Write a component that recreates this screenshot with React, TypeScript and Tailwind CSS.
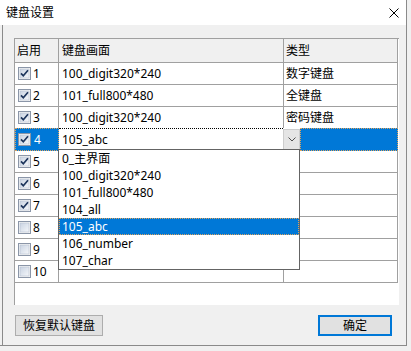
import React from 'react';

type Row = { n: number; on: boolean; name: string; type: string };

const rows: Row[] = [
  { n: 1, on: true, name: '100_digit320*240', type: '数字键盘' },
  { n: 2, on: true, name: '101_full800*480', type: '全键盘' },
  { n: 3, on: true, name: '100_digit320*240', type: '密码键盘' },
  { n: 4, on: true, name: '105_abc', type: '' },
  { n: 5, on: true, name: '', type: '' },
  { n: 6, on: true, name: '', type: '' },
  { n: 7, on: true, name: '', type: '' },
  { n: 8, on: false, name: '', type: '' },
  { n: 9, on: false, name: '', type: '' },
  { n: 10, on: false, name: '', type: '' },
];

const options = ['0_主界面', '100_digit320*240', '101_full800*480', '104_all', '105_abc', '106_number', '107_char'];

const CheckBox = ({ checked }: { checked: boolean }) => (
  <svg width="13" height="13" viewBox="0 0 13 13" className="shrink-0">
    <defs>
      <linearGradient id="cbfill" x1="0" y1="0" x2="1" y2="1">
        <stop offset="0" stopColor="#c9d3e2" />
        <stop offset="1" stopColor="#f5f7fa" />
      </linearGradient>
    </defs>
    <rect x="0.5" y="0.5" width="12" height="12" fill="#f6f6f6" stroke="#8b96a8" />
    <rect x="2" y="2" width="9" height="9" fill="url(#cbfill)" stroke="#b4bfcf" strokeWidth="0.6" />
    {checked && <path d="M3 6.3 L5.3 8.8 L10 3.3" fill="none" stroke="#1d355c" strokeWidth="1.7" />}
  </svg>
);

export default function App() {
  return (
    <div className="w-[411px] h-[351px] bg-[#f0f0f0] text-[12px] leading-none text-black font-['Noto_Sans','Noto_Sans_CJK_SC',sans-serif]">
      <div className="w-[407px] h-[346px] border-r border-b border-[#8a8a8a] flex flex-col">
        {/* title bar */}
        <div className="h-[25px] bg-white flex items-center justify-between pl-[6px] pr-[7px] shrink-0">
          <span>键盘设置</span>
          <svg width="10" height="10" viewBox="0 0 10 10">
            <path d="M0.5 0.5 L9.5 9.5 M9.5 0.5 L0.5 9.5" stroke="#000" strokeWidth="1" />
          </svg>
        </div>

        <div className="flex-1 ml-[2px] border-l border-[#8a8a8a] flex flex-col">
          {/* grid */}
          <div className="relative ml-[11px] mt-[13px] w-[385px] h-[267px] bg-white border-l border-t border-[#a0a0a0]">
            <div className="flex w-[383px] h-[24px] bg-[#f0f0f0] border-b border-[#a0a0a0]">
              <div className="w-[44px] border-r border-[#a0a0a0] flex items-center pl-[2px]">启用</div>
              <div className="w-[225px] border-r border-[#a0a0a0] flex items-center pl-[3px]">键盘画面</div>
              <div className="w-[114px] border-r border-[#a0a0a0] flex items-center pl-[2px]">类型</div>
            </div>

            {rows.map((r) => {
              if (r.n === 4) {
                return (
                  <div key={r.n} className="flex w-[383px] h-[23px]">
                    <div className="w-[44px] bg-[#0078d7] border border-dotted border-[#dca35f] flex items-center pl-[2px] gap-[3px] text-white">
                      <CheckBox checked={r.on} />
                      <span>{r.n}</span>
                    </div>
                    <div className="w-[224px] bg-white border-t border-dotted border-black flex items-center pl-[3px]">
                      {r.name}
                    </div>
                    <div className="w-[17px] my-[1px] bg-[#e5e5e5] border border-[#cdcdcd] flex items-center justify-center">
                      <svg width="8" height="5" viewBox="0 0 8 5">
                        <path d="M0.5 0.5 L4 4 L7.5 0.5" fill="none" stroke="#505050" strokeWidth="1" />
                      </svg>
                    </div>
                    <div className="w-[98px] bg-[#0078d7] border border-dotted border-[#dca35f]" />
                  </div>
                );
              }
              return (
                <div key={r.n} className={`flex w-[383px] ${r.n === 3 ? 'h-[21px]' : 'h-[22px] border-b border-[#a0a0a0]'}`}>
                  <div className="w-[44px] border-r border-[#a0a0a0] flex items-center pl-[3px] gap-[2px]">
                    <CheckBox checked={r.on} />
                    <span>{r.n}</span>
                  </div>
                  <div className="w-[225px] border-r border-[#a0a0a0] flex items-center pl-[3px]">{r.name}</div>
                  <div className="w-[114px] border-r border-[#a0a0a0] flex items-center pl-[2px]">{r.type}</div>
                </div>
              );
            })}

            {/* open drop-down list */}
            <div className="absolute left-[43px] top-[110px] w-[242px] h-[121px] bg-white border border-[#646464]">
              {options.map((o) =>
                o === '105_abc' ? (
                  <div key={o} className="h-[17px] flex items-center pl-[2px] bg-[#0078d7] text-white border border-dotted border-[#dca35f]">
                    {o}
                  </div>
                ) : (
                  <div key={o} className="h-[17px] flex items-center pl-[3px]">
                    {o}
                  </div>
                )
              )}
            </div>
          </div>

          {/* buttons */}
          <div className="flex justify-between mt-[10px] pl-[12px] pr-[14px]">
            <button className="w-[88px] h-[21px] bg-[#e1e1e1] border border-[#adadad] flex items-center justify-center">
              恢复默认键盘
            </button>
            <button className="w-[74px] h-[21px] bg-[#e1e1e1] border-2 border-[#0078d7] flex items-center justify-center">
              确定
            </button>
          </div>
        </div>
      </div>
    </div>
  );
}
